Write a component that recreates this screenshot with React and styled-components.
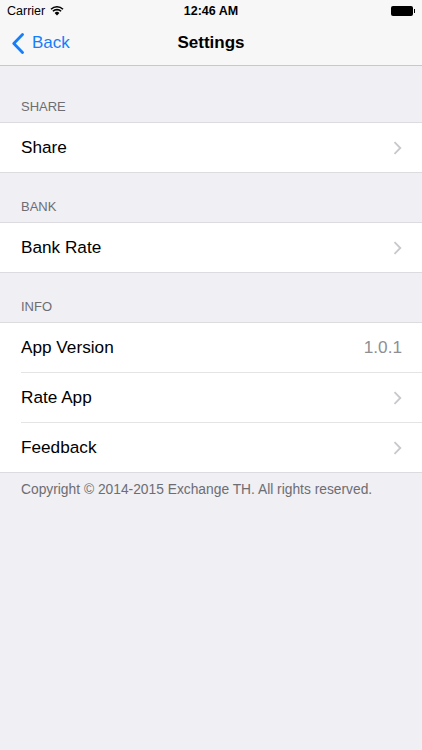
import React from "react";
import styled, { createGlobalStyle } from "styled-components";

const GlobalStyle = createGlobalStyle`
  html, body {
    margin: 0;
    padding: 0;
    background: #efeff4;
  }
  body {
    font-family: "Liberation Sans", Arial, sans-serif;
    -webkit-font-smoothing: antialiased;
  }
`;

const Screen = styled.div`
  width: 422px;
  min-height: 750px;
  background: #efeff4;
  display: flex;
  flex-direction: column;
`;

const Header = styled.div`
  background: #f7f7f8;
  border-bottom: 1px solid #c8c7cc;
`;

const StatusBar = styled.div`
  height: 21px;
  display: grid;
  grid-template-columns: 1fr auto 1fr;
  align-items: center;
  padding: 0 7px;
  font-size: 12.5px;
  color: #000;
`;

const Carrier = styled.div`
  display: flex;
  align-items: center;
  gap: 5px;
`;

const Clock = styled.div`
  font-weight: 700;
  font-size: 12.5px;
`;

const Battery = styled.div`
  justify-self: end;
  display: flex;
  align-items: center;
`;

const BatteryBody = styled.div`
  width: 22px;
  height: 10px;
  border-radius: 2px;
  background: #000;
`;

const BatteryTip = styled.div`
  width: 1.5px;
  height: 4px;
  background: #000;
  margin-left: 1px;
`;

const NavBar = styled.div`
  height: 44px;
  display: grid;
  grid-template-columns: 1fr auto 1fr;
  align-items: center;
  padding: 0 12px;
`;

const BackButton = styled.div`
  display: flex;
  align-items: center;
  gap: 8px;
  color: #147efb;
  font-size: 17px;
`;

const Title = styled.div`
  font-weight: 700;
  font-size: 17px;
  color: #000;
`;

const SectionTitle = styled.div`
  height: ${p => p.$height}px;
  display: flex;
  align-items: flex-end;
  padding: 0 21px 8px;
  box-sizing: border-box;
  font-size: 13px;
  color: #6d6d72;
`;

const Group = styled.div`
  background: #fff;
  border-top: 1px solid #dcdce0;
  border-bottom: 1px solid #dcdce0;
`;

const Row = styled.div`
  height: ${p => (p.$first ? 49 : 50)}px;
  margin-left: 21px;
  padding-right: 20px;
  display: flex;
  align-items: center;
  justify-content: space-between;
  border-top: ${p => (p.$first ? "none" : "1px solid #e4e4e7")};
  box-sizing: border-box;
`;

const Label = styled.span`
  font-size: 17.2px;
  color: #000;
`;

const Detail = styled.span`
  font-size: 17.2px;
  color: #8e8e93;
`;

const Footer = styled.div`
  padding: 9px 21px;
  font-size: 13.8px;
  line-height: 16px;
  color: #6d6d72;
`;

const Wifi = () => (
  <svg width="14" height="11" viewBox="0 0 14 11">
    <path d="M7 10.5 L4.6 8 A3.4 3.4 0 0 1 9.4 8 Z" fill="#000" />
    <path d="M2.9 6.3 A5.8 5.8 0 0 1 11.1 6.3" stroke="#000" strokeWidth="1.6" fill="none" />
    <path d="M1 4.2 A8.6 8.6 0 0 1 13 4.2" stroke="#000" strokeWidth="1.6" fill="none" />
  </svg>
);

const BackChevron = () => (
  <svg width="12" height="21" viewBox="0 0 12 21">
    <path d="M10.5 1.5 L1.8 10.5 L10.5 19.5" stroke="#147efb" strokeWidth="2.8" fill="none" strokeLinecap="round" strokeLinejoin="round" />
  </svg>
);

const Chevron = () => (
  <svg width="9" height="14" viewBox="0 0 9 14">
    <path d="M1.5 1.2 L7.3 7 L1.5 12.8" stroke="#c7c7cc" strokeWidth="1.8" fill="none" />
  </svg>
);

const sections = [
  { title: "SHARE", height: 56, rows: [{ label: "Share" }] },
  { title: "BANK", height: 49, rows: [{ label: "Bank Rate" }] },
  {
    title: "INFO",
    height: 49,
    rows: [
      { label: "App Version", detail: "1.0.1" },
      { label: "Rate App" },
      { label: "Feedback" },
    ],
  },
];

export default function App() {
  return (
    <Screen>
      <GlobalStyle />
      <Header>
        <StatusBar>
          <Carrier>
            Carrier <Wifi />
          </Carrier>
          <Clock>12:46 AM</Clock>
          <Battery>
            <BatteryBody />
            <BatteryTip />
          </Battery>
        </StatusBar>
        <NavBar>
          <BackButton>
            <BackChevron />
            Back
          </BackButton>
          <Title>Settings</Title>
          <div />
        </NavBar>
      </Header>
      {sections.map(s => (
        <React.Fragment key={s.title}>
          <SectionTitle $height={s.height}>{s.title}</SectionTitle>
          <Group>
            {s.rows.map((r, i) => (
              <Row key={r.label} $first={i === 0}>
                <Label>{r.label}</Label>
                {r.detail ? <Detail>{r.detail}</Detail> : <Chevron />}
              </Row>
            ))}
          </Group>
        </React.Fragment>
      ))}
      <Footer>Copyright © 2014-2015 Exchange TH. All rights reserved.</Footer>
    </Screen>
  );
}
